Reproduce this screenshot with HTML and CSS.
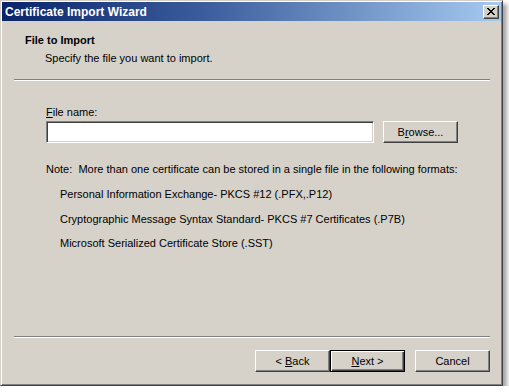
FILE: index.html
```html
<!DOCTYPE html>
<html lang="en">
<head>
  <meta charset="UTF-8" />
  <title>Certificate Import Wizard</title>
  <link rel="stylesheet" href="styles.css">
</head>
<body>
  <div class="window">
    <div class="titlebar">
      <span class="title">Certificate Import Wizard</span>
      <button class="close-btn" aria-label="Close">
        <svg width="8" height="7" viewBox="0 0 8 7" shape-rendering="crispEdges">
          <path d="M0 0h2v1h-2zM6 0h2v1h-2zM1 1h2v1h-2zM5 1h2v1h-2zM2 2h4v1h-4zM3 3h2v1h-2zM2 4h4v1h-4zM1 5h2v1h-2zM5 5h2v1h-2zM0 6h2v1h-2zM6 6h2v1h-2z" fill="#000"/>
        </svg>
      </button>
    </div>

    <div class="header">
      <div class="header-title">File to Import</div>
      <div class="header-sub">Specify the file you want to import.</div>
    </div>
    <div class="etched"></div>

    <div class="content">
      <label class="field-label" for="fileName"><u>F</u>ile name:</label>
      <div class="file-row">
        <input type="text" id="fileName" class="text-input">
        <button class="btn"><span>B<u>r</u>owse...</span></button>
      </div>
      <p class="note">Note:&nbsp; More than one certificate can be stored in a single file in the following formats:</p>
      <ul class="formats">
        <li>Personal Information Exchange- PKCS #12 (.PFX,.P12)</li>
        <li>Cryptographic Message Syntax Standard- PKCS #7 Certificates (.P7B)</li>
        <li>Microsoft Serialized Certificate Store (.SST)</li>
      </ul>
    </div>

    <div class="etched"></div>
    <div class="footer">
      <div class="btn-pair">
        <button class="btn">&lt; <u>B</u>ack</button>
        <button class="btn btn-default"><u>N</u>ext &gt;</button>
      </div>
      <button class="btn">Cancel</button>
    </div>
  </div>
</body>
</html>
```

FILE: styles.css
```css
body {
  margin: 0;
  background: #fff;
  font-family: "Liberation Sans", Arial, sans-serif;
  font-size: 11px;
  color: #000;
}
.window {
  width: 503px;
  height: 386px;
  box-sizing: border-box;
  display: flex;
  flex-direction: column;
  background: #d6d2ca;
  border: 1px solid;
  border-color: #d4d0c8 #404040 #404040 #d4d0c8;
  box-shadow: inset 1px 1px #fff, inset -1px -1px #808080, 4px 4px 4px rgba(0,0,0,0.35);
  padding: 1px;
}
/* Title bar */
.titlebar {
  height: 19px;
  display: flex;
  align-items: center;
  justify-content: space-between;
  padding: 0 2px 0 3px;
  background: linear-gradient(90deg, #0a246a 0%, #3a5c9c 40%, #a6caf0 100%);
}
.title {
  color: #fff;
  font-weight: bold;
  font-size: 12px;
}
.close-btn {
  width: 16px;
  height: 14px;
  padding: 0;
  margin: 0;
  display: flex;
  align-items: center;
  justify-content: center;
  background: #d4d0c8;
  border: 1px solid;
  border-color: #fff #404040 #404040 #fff;
  box-shadow: inset -1px -1px #808080;
}
/* Header */
.header {
  height: 58px;
  box-sizing: border-box;
  padding: 13px 0 0 23px;
  line-height: 13px;
}
.header-title { font-weight: bold; }
.header-sub { margin: 5px 0 0 20px; }
.etched {
  height: 0;
  margin: 0 11px 0 12px;
  border-top: 1px solid #808080;
  border-bottom: 1px solid #fff;
}
/* Main content */
.content {
  flex: 1;
  padding: 25px 0 0 44px;
  line-height: 13px;
}
.field-label { display: block; }
.file-row {
  display: flex;
  gap: 9px;
  margin-top: 2px;
}
.text-input {
  width: 328px;
  height: 22px;
  box-sizing: border-box;
  margin: 0;
  background: #fff;
  border: 1px solid;
  border-color: #808080 #fff #fff #808080;
  box-shadow: inset 1px 1px #404040, inset -1px -1px #d4d0c8;
  font: inherit;
}
.note { margin: 20px 0 0 0; }
.formats {
  list-style: none;
  margin: 12px 0 0 0;
  padding: 0 0 0 14px;
}
.formats li { margin-bottom: 11.5px; }
/* Buttons */
.btn {
  width: 75px;
  height: 22px;
  box-sizing: border-box;
  margin: 0;
  padding: 0;
  background: #d6d2ca;
  border: 1px solid;
  border-color: #fff #404040 #404040 #fff;
  box-shadow: inset -1px -1px #808080;
  font: inherit;
  color: #000;
}
.btn-default {
  border-color: #000;
  box-shadow: inset 1px 1px #fff, inset -1px -1px #404040, inset -2px -2px #808080;
}
.footer {
  display: flex;
  justify-content: flex-end;
  gap: 10px;
  padding: 12px 11px 12px 0;
}
.btn-pair { display: flex; }
```
